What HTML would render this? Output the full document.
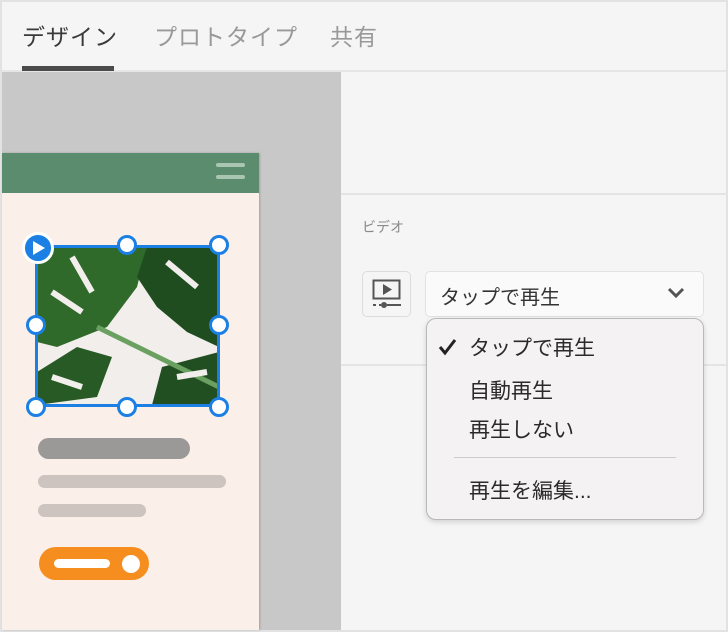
<!DOCTYPE html>
<html><head><meta charset="utf-8"><style>
*{margin:0;padding:0;box-sizing:border-box}
body{width:728px;height:632px;position:relative;overflow:hidden;background:#e2e2e2;font-family:"Liberation Sans","Noto Sans CJK JP",sans-serif}
.a{position:absolute}
</style></head><body>
<div class="a" style="left:2px;top:2px;width:724px;height:628px;background:#f5f5f5"></div>
<div class="a" style="left:22px;top:18px;font-size:23px;color:#3a3a3a;letter-spacing:1px">デザイン</div>
<div class="a" style="left:154px;top:18px;font-size:23px;color:#999;letter-spacing:1px">プロトタイプ</div>
<div class="a" style="left:330px;top:18px;font-size:23px;color:#999;letter-spacing:1px">共有</div>
<div class="a" style="left:2px;top:70px;width:724px;height:2px;background:#e6e6e6"></div>
<div class="a" style="left:22px;top:66px;width:92px;height:5px;background:#4b4b4b"></div>
<div class="a" style="left:2px;top:72px;width:339px;height:558px;background:#c8c8c8"></div>
<div class="a" style="left:2px;top:153px;width:257px;height:477px;background:#faf0e9;box-shadow:1px 0 2px rgba(0,0,0,.2)"></div>
<div class="a" style="left:2px;top:153px;width:257px;height:40px;background:#5b8c6e"></div>
<div class="a" style="left:216px;top:163px;width:29px;height:4px;border-radius:2px;background:#a9c6b3"></div>
<div class="a" style="left:216px;top:175px;width:29px;height:4px;border-radius:2px;background:#a9c6b3"></div>
<svg class="a" style="left:37px;top:247px" width="182" height="158" viewBox="0 0 182 158">
<rect width="182" height="158" fill="#f2eeeb"/>
<path d="M0 0H110L100 40 70 80 20 100 0 95Z" fill="#2f6a2a"/>
<path d="M110 0H182V100L150 85 120 60 100 30Z" fill="#1f4d1f"/>
<path d="M0 125L40 100 75 110 60 150 0 158Z" fill="#275a25"/>
<path d="M125 120L182 105V158H115Z" fill="#214f22"/>
<path d="M60 80L182 140" stroke="#6aa060" stroke-width="5"/>
<path d="M15 45l30 20M35 10l20 35M130 15l30 25M15 130l30 10M140 130l30 -5" stroke="#f2eeeb" stroke-width="6"/>
</svg>
<div class="a" style="left:35px;top:245px;width:185px;height:162px;border:3px solid #1b7fe3"></div>
<div class="a" style="left:22px;top:232px;width:32px;height:32px;border-radius:50%;background:#1b7fe3;border:3px solid #fff"></div>
<svg class="a" style="left:31px;top:240px" width="16" height="16"><path d="M2 1L14 8L2 15Z" fill="#fff"/></svg>
<div class="a" style="left:117px;top:235px;width:20px;height:20px;border-radius:50%;background:#fff;border:3px solid #1b7fe3"></div>
<div class="a" style="left:209px;top:235px;width:20px;height:20px;border-radius:50%;background:#fff;border:3px solid #1b7fe3"></div>
<div class="a" style="left:26px;top:315px;width:20px;height:20px;border-radius:50%;background:#fff;border:3px solid #1b7fe3"></div>
<div class="a" style="left:209px;top:315px;width:20px;height:20px;border-radius:50%;background:#fff;border:3px solid #1b7fe3"></div>
<div class="a" style="left:26px;top:397px;width:20px;height:20px;border-radius:50%;background:#fff;border:3px solid #1b7fe3"></div>
<div class="a" style="left:117px;top:397px;width:20px;height:20px;border-radius:50%;background:#fff;border:3px solid #1b7fe3"></div>
<div class="a" style="left:209px;top:397px;width:20px;height:20px;border-radius:50%;background:#fff;border:3px solid #1b7fe3"></div>
<div class="a" style="left:38px;top:438px;width:152px;height:21px;border-radius:11px;background:#9b9898"></div>
<div class="a" style="left:38px;top:475px;width:188px;height:13px;border-radius:7px;background:#cdc4bf"></div>
<div class="a" style="left:38px;top:504px;width:108px;height:13px;border-radius:7px;background:#cdc4bf"></div>
<div class="a" style="left:39px;top:547px;width:110px;height:33px;border-radius:17px;background:#f68d1f"></div>
<div class="a" style="left:54px;top:559px;width:56px;height:9px;border-radius:5px;background:#fff"></div>
<div class="a" style="left:122px;top:555px;width:18px;height:18px;border-radius:50%;background:#fff"></div>
<div class="a" style="left:341px;top:193px;width:385px;height:2px;background:#e4e4e4"></div>
<div class="a" style="left:341px;top:364px;width:385px;height:2px;background:#e4e4e4"></div>
<div class="a" style="left:362px;top:217px;font-size:14px;color:#8a8a8a">ビデオ</div>
<div class="a" style="left:362px;top:271px;width:49px;height:46px;border-radius:5px;background:#f5f5f5;border:1px solid #dcdcdc"></div>
<svg class="a" style="left:372px;top:279px" width="30" height="30"><rect x="1.5" y="1.5" width="26" height="18" fill="none" stroke="#555" stroke-width="2"/><path d="M11 5l9 5.5-9 5.5z" fill="#555"/><path d="M1 26h3M7 26h2M15 26h14" stroke="#555" stroke-width="2"/><circle cx="12" cy="26" r="3" fill="#555"/></svg>
<div class="a" style="left:425px;top:271px;width:279px;height:46px;border-radius:5px;background:#fafafa;border:1px solid #e2e2e2"></div>
<div class="a" style="left:440px;top:281px;font-size:20px;color:#333">タップで再生</div>
<svg class="a" style="left:667px;top:286px" width="18" height="14"><path d="M2 3l7 7 7-7" fill="none" stroke="#555" stroke-width="3"/></svg>
<div class="a" style="left:426px;top:318px;width:278px;height:202px;border-radius:10px;background:#f4f2f2;border:1px solid #b9b9b9;box-shadow:0 2px 6px rgba(0,0,0,.15)"></div>
<svg class="a" style="left:438px;top:338px" width="20" height="18"><path d="M2 9l5 6 10-13" fill="none" stroke="#222" stroke-width="3"/></svg>
<div class="a" style="left:469px;top:332px;font-size:21px;color:#2a2a2a">タップで再生</div>
<div class="a" style="left:469px;top:375px;font-size:21px;color:#2a2a2a">自動再生</div>
<div class="a" style="left:469px;top:414px;font-size:21px;color:#2a2a2a">再生しない</div>
<div class="a" style="left:454px;top:457px;width:222px;height:1px;background:#ccc"></div>
<div class="a" style="left:469px;top:475px;font-size:21px;color:#2a2a2a">再生を編集...</div>
</body></html>
